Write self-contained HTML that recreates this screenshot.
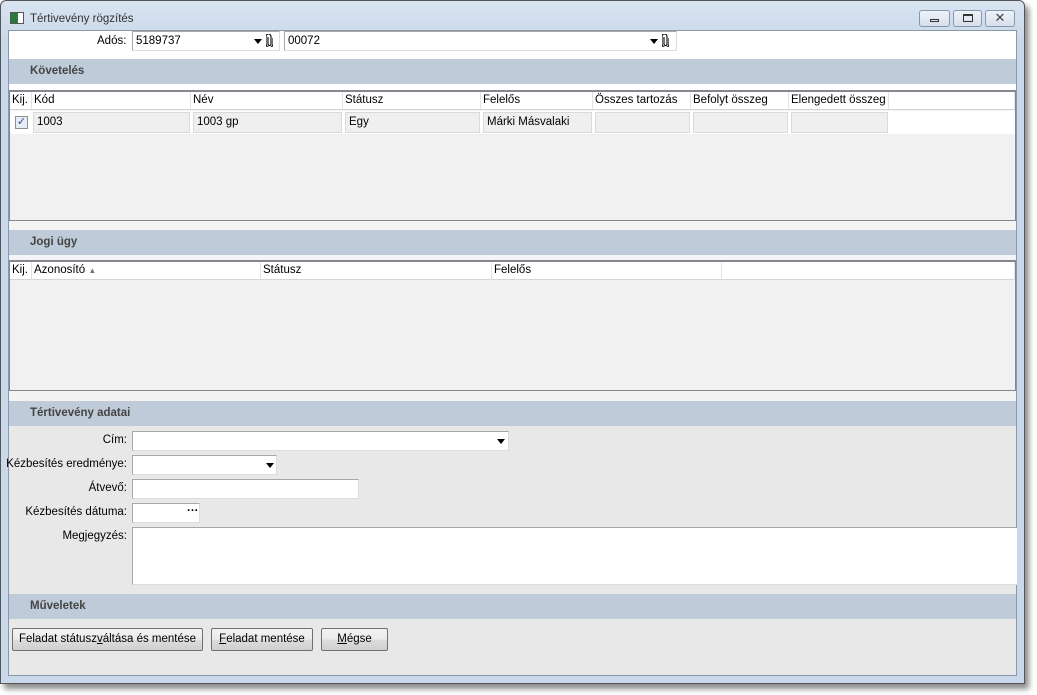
<!DOCTYPE html>
<html><head><meta charset="utf-8"><style>
*{margin:0;padding:0;box-sizing:border-box}
body{width:1037px;height:695px;background:#fff;font-family:"Liberation Sans",sans-serif;font-size:11.5px;color:#000;position:relative;overflow:hidden;white-space:nowrap}
.a{position:absolute}
.win{left:0;top:0;width:1025px;height:684px;border:1px solid #555;border-radius:6px 6px 0 0;background:linear-gradient(#d9e4f1,#c9d8ea 40px,#c9d8ea);box-shadow:4px 5px 6px rgba(0,0,0,.45)}
.cl{left:8px;top:30px;width:1009px;height:646px;background:#e8e8e8;border:1px solid #8a98aa}
.hdr{left:9px;width:1007px;height:25px;background:#bfcbd9;font-weight:bold;color:#444;padding:6px 0 0 21px}
.in{background:#fff;border:1px solid #dcdcdc;border-top-color:#a8a8a8;border-left-color:#a8a8a8}
.grid{left:9px;width:1007px;background:#f1f1f1;border:1px solid #828790;border-top:2px solid #828790}
.gh{position:absolute;top:0;height:18px;background:#fff;border-right:1px solid #e3e3e3;border-bottom:1px solid #d5d5d5;padding:2px 0 0 2px;overflow:hidden}
.gc{position:absolute;top:20px;height:21px;background:#efefef;border:1px solid #dadada;padding:3px 0 0 3px}
.lbl{text-align:right;width:125px;left:2px}
.btn{top:628px;height:23px;border:1px solid #707070;border-radius:2px;background:linear-gradient(#f2f2f2,#ebebeb 50%,#dddddd 51%,#cfcfcf);text-align:center;padding-top:4px}
.wb{top:10px;height:17px;border:1px solid #8797ab;border-radius:3px;background:linear-gradient(#eef3f9,#d5dfeb)}
.tri{width:0;height:0;border-left:4px solid transparent;border-right:4px solid transparent;border-top:5px solid #000}
</style></head><body>
<div class="a win"></div>
<div class="a" style="left:10px;top:12px;width:14px;height:12px;border:1px solid #555;background:linear-gradient(90deg,#2b7a3a 60%,#fff 60%)"></div>
<div class="a" style="left:30px;top:13px;color:#333">Tértivevény rögzítés</div>
<div class="a wb" style="left:919px;width:31px"><div class="a" style="left:10px;top:8px;width:9px;height:3px;border:1px solid #333"></div></div>
<div class="a wb" style="left:953px;width:29px"><div class="a" style="left:9px;top:3px;width:10px;height:8px;border:1px solid #333;border-top-width:2px"></div></div>
<div class="a wb" style="left:985px;width:30px;text-align:center;font-size:13px;line-height:14px;color:#444">✕</div>
<div class="a cl"></div>
<div class="a" style="left:9px;top:31px;width:1007px;height:28px;background:#fff"></div>
<div class="a" style="left:97px;top:35px">Adós:</div>
<div class="a in" style="left:132px;top:31px;width:148px;height:20px;padding:3px 3px">5189737</div>
<div class="a tri" style="left:254px;top:39px"></div>
<svg class="a" style="left:266px;top:34px" width="7" height="13" viewBox="0 0 7 13"><path d="M2 3V10a1.5 1.5 0 0 0 3 0V2.5a2.5 2.5 0 0 0-5 0V10a3.5 3.5 0 0 0 7 0V4" fill="none" stroke="#000" stroke-width="1.1"/></svg>
<div class="a in" style="left:284px;top:31px;width:393px;height:20px;padding:3px 3px">00072</div>
<div class="a tri" style="left:650px;top:39px"></div>
<svg class="a" style="left:662px;top:34px" width="7" height="13" viewBox="0 0 7 13"><path d="M2 3V10a1.5 1.5 0 0 0 3 0V2.5a2.5 2.5 0 0 0-5 0V10a3.5 3.5 0 0 0 7 0V4" fill="none" stroke="#000" stroke-width="1.1"/></svg>
<div class="a hdr" style="top:59px">Követelés</div>
<div class="a" style="left:9px;top:84px;width:1007px;height:6px;background:#fff"></div>
<div class="a grid" style="top:90px;height:131px">
<div class="gh" style="left:0;width:22px">Kij.</div>
<div class="gh" style="left:22px;width:159px">Kód</div>
<div class="gh" style="left:181px;width:152px">Név</div>
<div class="gh" style="left:333px;width:138px">Státusz</div>
<div class="gh" style="left:471px;width:112px">Felelős</div>
<div class="gh" style="left:583px;width:98px">Összes tartozás</div>
<div class="gh" style="left:681px;width:98px">Befolyt összeg</div>
<div class="gh" style="left:779px;width:100px">Elengedett összeg</div>
<div class="gh" style="left:879px;width:126px"></div>
<div class="a" style="left:0;top:19px;width:1005px;height:23px;background:#fff"></div>
<div class="a" style="left:5px;top:24px;width:13px;height:13px;border:1px solid #8f8f8f;background:#e8eef8;color:#2a4a8a;font-size:11px;line-height:11px;text-align:center">✓</div>
<div class="gc" style="left:23px;width:157px">1003</div>
<div class="gc" style="left:183px;width:149px">1003 gp</div>
<div class="gc" style="left:335px;width:135px">Egy</div>
<div class="gc" style="left:473px;width:109px">Márki Másvalaki</div>
<div class="gc" style="left:585px;width:95px"></div>
<div class="gc" style="left:683px;width:95px"></div>
<div class="gc" style="left:781px;width:97px"></div>
</div>
<div class="a" style="left:9px;top:221px;width:1007px;height:9px;background:#f4f4f4"></div>
<div class="a hdr" style="top:230px">Jogi ügy</div>
<div class="a" style="left:9px;top:255px;width:1007px;height:5px;background:#f4f4f4"></div>
<div class="a grid" style="top:260px;height:131px">
<div class="gh" style="left:0;width:22px">Kij.</div>
<div class="gh" style="left:22px;width:229px">Azonosító <span style="font-size:8px;color:#777">▲</span></div>
<div class="gh" style="left:251px;width:231px">Státusz</div>
<div class="gh" style="left:482px;width:230px">Felelős</div>
<div class="gh" style="left:712px;width:293px"></div>
</div>
<div class="a" style="left:9px;top:391px;width:1007px;height:10px;background:#f4f4f4"></div>
<div class="a hdr" style="top:401px">Tértivevény adatai</div>
<div class="a lbl" style="top:434px">Cím:</div>
<div class="a in" style="left:132px;top:431px;width:377px;height:20px"></div><div class="a tri" style="left:497px;top:439px"></div>
<div class="a lbl" style="top:458px;width:127px;left:0">Kézbesítés eredménye:</div>
<div class="a in" style="left:132px;top:455px;width:145px;height:20px"></div><div class="a tri" style="left:266px;top:463px"></div>
<div class="a lbl" style="top:482px">Átvevő:</div>
<div class="a in" style="left:132px;top:479px;width:227px;height:20px"></div>
<div class="a lbl" style="top:506px">Kézbesítés dátuma:</div>
<div class="a in" style="left:132px;top:503px;width:68px;height:20px"><span class="a" style="left:54px;top:1px;font-weight:bold">···</span></div>
<div class="a lbl" style="top:530px">Megjegyzés:</div>
<div class="a in" style="left:132px;top:527px;width:885px;height:58px;border-right:none"></div>
<div class="a hdr" style="top:594px">Műveletek</div>
<div class="a btn" style="left:12px;width:191px">Feladat státusz<u>v</u>áltása és mentése</div>
<div class="a btn" style="left:211px;width:102px"><u>F</u>eladat mentése</div>
<div class="a btn" style="left:321px;width:67px"><u>M</u>égse</div>
</body></html>
